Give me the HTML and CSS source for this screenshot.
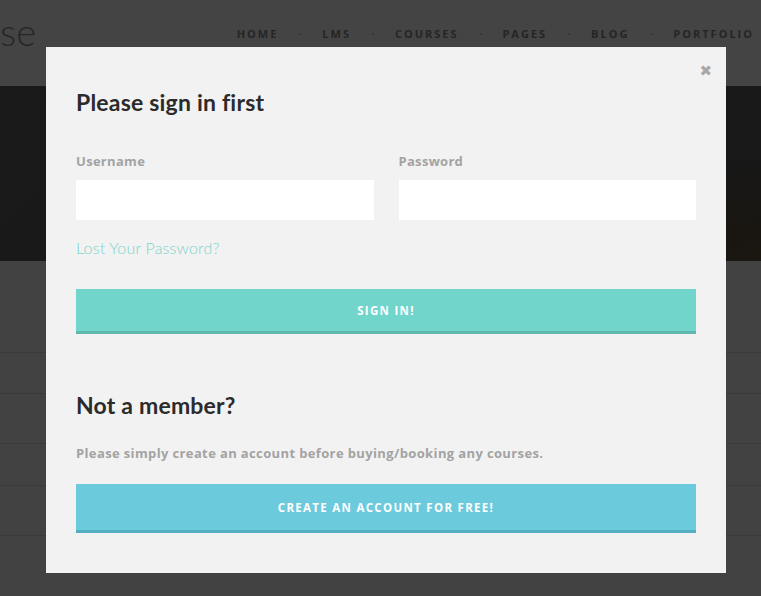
FILE: index.html
```html
<!DOCTYPE html>
<html lang="en">
<head>
<meta charset="utf-8">
<title>Sign in</title>
<link rel="stylesheet" href="styles.css">
</head>
<body>
<div class="page">
  <header class="site-header">
    <div class="logo">se</div>
    <nav class="nav">
      <a>HOME</a><span class="dot">·</span>
      <a>LMS</a><span class="dot">·</span>
      <a>COURSES</a><span class="dot">·</span>
      <a>PAGES</a><span class="dot">·</span>
      <a>BLOG</a><span class="dot">·</span>
      <a>PORTFOLIO</a>
    </nav>
  </header>
  <section class="hero"></section>
  <section class="rows">
    <div class="row r1"></div>
    <div class="row r2"></div>
    <div class="row r3"></div>
    <div class="row r4"></div>
    <div class="row r5"></div>
  </section>
</div>

<div class="modal">
  <span class="close">&#x2716;</span>
  <h2 class="title">Please sign in first</h2>
  <div class="fields">
    <div class="field">
      <label class="label">Username</label>
      <div class="input"></div>
    </div>
    <div class="field">
      <label class="label">Password</label>
      <div class="input"></div>
    </div>
  </div>
  <a class="lost">Lost Your Password?</a>
  <button class="btn btn-signin">SIGN IN!</button>
  <h2 class="title title2">Not a member?</h2>
  <p class="desc">Please simply create an account before buying/booking any courses.</p>
  <button class="btn btn-create">CREATE AN ACCOUNT FOR FREE!</button>
</div>
</body>
</html>
```

FILE: styles.css
```css
html, body {
  margin: 0;
  padding: 0;
}
body {
  width: 761px;
  height: 596px;
  overflow: hidden;
  background: #424242;
  font-family: "Open Sans", "Liberation Sans", sans-serif;
  position: relative;
}
.page {
  display: flex;
  flex-direction: column;
}
.site-header {
  height: 86px;
  background: #444444;
  display: flex;
  align-items: flex-start;
  justify-content: space-between;
  box-sizing: border-box;
}
.logo {
  font-family: "Lato", "Liberation Sans", sans-serif;
  font-weight: 300;
  font-size: 38px;
  line-height: 46px;
  margin-top: 8px;
  color: #262626;
}
.nav {
  display: flex;
  align-items: center;
  gap: 20.4px;
  margin-right: 7px;
  margin-top: 27px;
  font-family: "Open Sans", sans-serif;
  font-size: 11px;
  line-height: 14px;
  font-weight: 700;
  letter-spacing: 2px;
  color: #252525;
}
.nav .dot {
  letter-spacing: 0;
  color: #333333;
}
.hero {
  height: 175px;
  background: radial-gradient(ellipse at 100% 95%, #1a1610 0%, #181818 40%, #1a1a1a 100%);
}
.rows {
  display: flex;
  flex-direction: column;
  padding-top: 91px;
}
.row {
  border-top: 1px solid #3a3a3a;
}
.r1 { height: 40px; }
.r2 { height: 49px; }
.r3 { height: 41px; }
.r4 { height: 49px; }
.r5 { height: 40px; }

.modal {
  position: absolute;
  left: 46px;
  top: 47px;
  width: 680px;
  height: 526px;
  box-sizing: border-box;
  background: #f2f2f2;
  padding: 39px 30px 0 30px;
  display: flex;
  flex-direction: column;
}
.close {
  position: absolute;
  right: 14px;
  top: 16px;
  font-size: 15px;
  line-height: 16px;
  color: #a8a8a8;
  font-family: "DejaVu Sans", sans-serif;
}
.title {
  margin: 0;
  font-family: "Lato", "Open Sans", sans-serif;
  font-weight: 700;
  font-size: 23px;
  line-height: 32px;
  color: #2b2b2b;
  letter-spacing: 0.2px;
}
.fields {
  display: flex;
  gap: 25px;
  margin-top: 34px;
}
.field {
  flex: 1;
  display: flex;
  flex-direction: column;
}
.label {
  font-size: 13px;
  font-weight: 700;
  line-height: 18px;
  color: #a3a3a3;
  letter-spacing: 0.3px;
}
.input {
  margin-top: 10px;
  height: 40px;
  background: #ffffff;
}
.lost {
  margin-top: 18px;
  font-family: "Lato", "Open Sans", sans-serif;
  font-weight: 300;
  font-size: 16px;
  line-height: 20px;
  letter-spacing: 0.2px;
  color: #7dd2c9;
}
.btn {
  border: 0;
  margin: 0;
  width: 100%;
  color: #ffffff;
  font-family: "Open Sans", sans-serif;
  font-weight: 700;
  font-size: 11.5px;
  letter-spacing: 1.3px;
  cursor: pointer;
}
.btn-signin {
  margin-top: 31px;
  height: 45px;
  background: #72d5cc;
  border-bottom: 3px solid #5fb7ae;
}
.title2 {
  margin-top: 55px;
}
.desc {
  margin: 23px 0 0 0;
  font-size: 13px;
  font-weight: 700;
  line-height: 18px;
  color: #a3a3a3;
  letter-spacing: 0.37px;
}
.btn-create {
  margin-top: 22px;
  height: 49px;
  background: #6ccadd;
  border-bottom: 3px solid #52aec0;
}
```
